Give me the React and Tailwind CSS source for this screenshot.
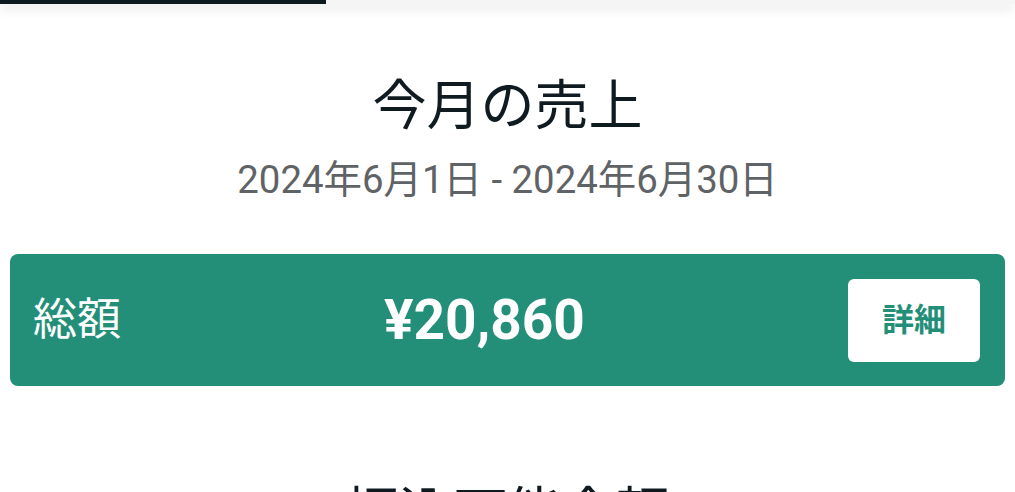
import React from 'react';

const font = { fontFamily: 'Roboto, "Noto Sans CJK JP", sans-serif' };

const SalesCard = ({ label, amount }) => {
  return (
    <div className="mx-[10px] flex h-[132px] items-center justify-between rounded-[8px] bg-[#248f78] pl-[23px] pr-[25px]">
      <span className="text-[44px] leading-[52px] text-white">{label}</span>
      <span className="text-[55px] font-bold leading-[64px] text-white">{amount}</span>
      <button className="rounded-[6px] bg-white px-[34px] py-[18px] text-[32px] font-bold leading-[47px] text-[#248f78]">
        詳細
      </button>
    </div>
  );
};

const App = () => {
  return (
    <div className="min-h-screen overflow-hidden bg-white" style={font}>
      {/* header bar with loading progress */}
      <div className="relative z-10 h-[4px] w-full bg-[#f5f5f5] shadow-[0_4px_12px_rgba(0,0,0,0.16)]">
        <div className="h-full w-[326px] bg-[#0c1a20]" />
      </div>

      <div className="flex flex-col items-center pt-[71px]">
        <h1 className="text-[54px] leading-[64px] text-[#0f1b20]">今月の売上</h1>
        <p className="mt-[18px] text-[38.4px] leading-[46px] text-[#5f6366]">
          2024年6月1日 - 2024年6月30日
        </p>
      </div>

      <div className="mt-[51px]">
        <SalesCard label="総額" amount="¥20,860" />
      </div>

      <div className="mt-[96px] flex justify-center">
        <h2 className="text-[54px] leading-[64px] text-[#0f1b20]">振込可能金額</h2>
      </div>
    </div>
  );
};

export default App;
